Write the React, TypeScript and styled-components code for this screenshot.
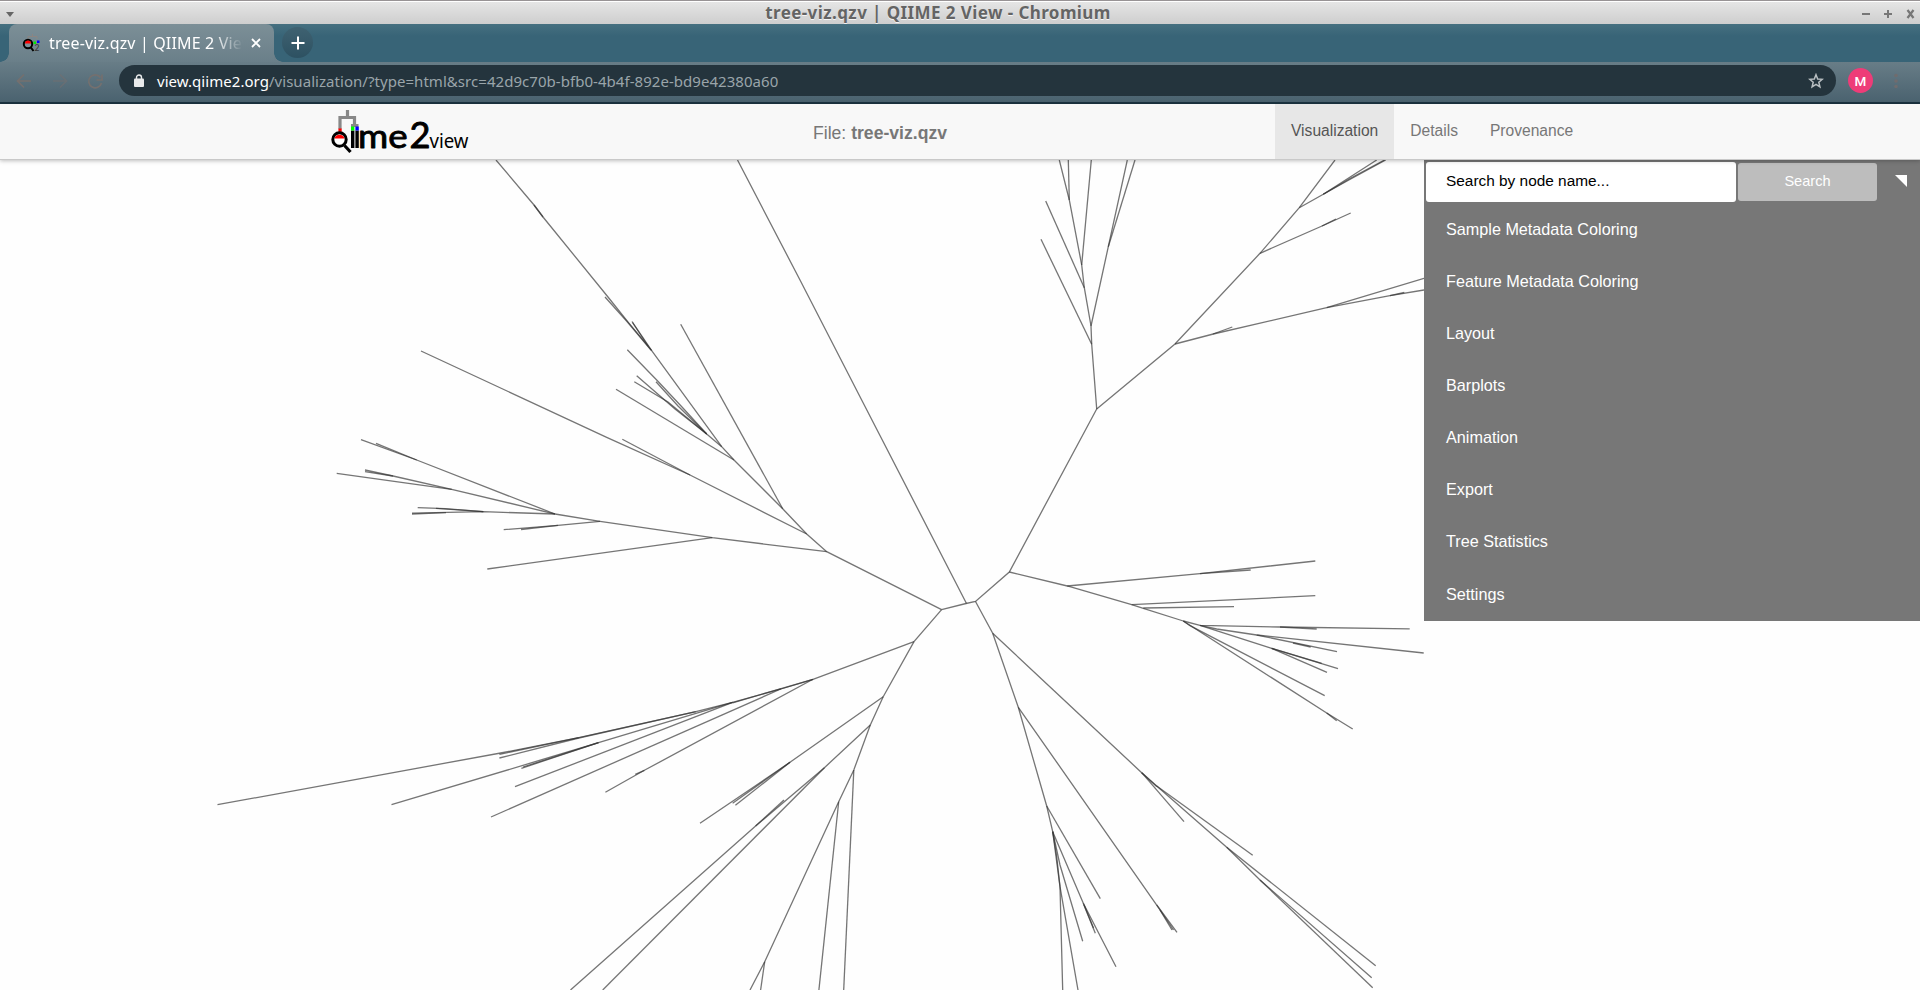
import React from "react";
import styled, { createGlobalStyle } from "styled-components";

const GlobalStyle = createGlobalStyle`
  * { box-sizing: border-box; }
  html, body { margin: 0; padding: 0; background: #fff; overflow: hidden; }
  body { font-family: "Liberation Sans", Arial, sans-serif; }
`;

const Window = styled.div`
  width: 1920px;
  height: 990px;
  display: flex;
  flex-direction: column;
  overflow: hidden;
  background: #fefefe;
`;

/* window chrome */

const TitleBar = styled.div`
  height: 24px;
  flex: none;
  display: grid;
  grid-template-columns: 20px 1fr 64px;
  align-items: center;
  border-top: 1px solid #989395;
  box-shadow: inset 0 1px 0 #fff;
  background: linear-gradient(#e6e6e6, #cecece);
`;

const WindowTitle = styled.div`
  text-align: center;
  font: bold 17px/22px "Noto Sans", sans-serif;
  letter-spacing: 0.41px;
  color: #646464;
  text-shadow: 0 1px 0 #f4f4f4;
  white-space: nowrap;
`;

const TabStrip = styled.div`
  height: 38px;
  flex: none;
  display: flex;
  padding-left: 9px;
  background: linear-gradient(#467080, #386477 12px, #386477);
`;

const Tab = styled.div`
  position: relative;
  width: 265px;
  height: 38px;
  display: flex;
  align-items: center;
  padding-left: 13px;
  border-radius: 8px 8px 0 0;
  background: linear-gradient(#7c8f97, #6a7f89);
  &::before,
  &::after {
    content: "";
    position: absolute;
    bottom: 0;
    width: 9px;
    height: 9px;
  }
  &::before {
    left: -9px;
    background: radial-gradient(circle at 0 0, transparent 8.5px, #6a7f89 9px);
  }
  &::after {
    right: -9px;
    background: radial-gradient(circle at 100% 0, transparent 8.5px, #6a7f89 9px);
  }
`;

const TabTitle = styled.div`
  width: 194px;
  margin-left: 9px;
  overflow: hidden;
  white-space: nowrap;
  font: 16px/24px "Noto Sans", sans-serif;
  letter-spacing: 0.15px;
  color: #fff;
  mask-image: linear-gradient(90deg, #000 164px, transparent 194px);
`;

const TabClose = styled.svg`
  margin-left: 8px;
`;

const NewTab = styled.div`
  width: 31px;
  height: 31px;
  margin: 3px 0 0 8px;
  border-radius: 50%;
  display: flex;
  align-items: center;
  justify-content: center;
  background: linear-gradient(#3f6271, #2d5162);
`;

const Toolbar = styled.div`
  height: 42px;
  flex: none;
  display: flex;
  align-items: center;
  padding: 0 0 3px 12px;
  border-bottom: 2px solid #1b3340;
  background: linear-gradient(#687d87, #4a626f);
`;

const NavIcons = styled.svg`
  flex: none;
  margin-right: 11px;
`;

const AddressBar = styled.div`
  width: 1717px;
  height: 31px;
  display: flex;
  align-items: center;
  padding: 0 12px 0 14px;
  border-radius: 16px;
  background: #24343d;
`;

const Url = styled.div`
  flex: 1;
  margin-left: 12px;
  font: 15px/24px "Noto Sans", sans-serif;
  letter-spacing: 0.045px;
  color: #9aa5aa;
  white-space: nowrap;
`;

const Host = styled.span`
  color: #fff;
`;

const Avatar = styled.div`
  width: 25px;
  height: 25px;
  margin-left: 12px;
  border-radius: 50%;
  background: #ee3c78;
  color: #fff;
  font: 500 13.5px/26px Roboto, sans-serif;
  text-align: center;
`;

const MenuDots = styled.svg`
  margin-left: 18px;
`;

/* page header */

const Header = styled.header`
  position: relative;
  z-index: 1;
  height: 56px;
  flex: none;
  display: flex;
  padding-left: 325px;
  background: #f8f8f8;
  border-bottom: 1px solid #c9c9c9;
  box-shadow: 0 1px 4px rgba(0, 0, 0, 0.25);
`;

const Logo = styled.svg`
  flex: none;
  margin-right: 10px;
`;

const FileName = styled.div`
  width: 790px;
  padding-top: 3px;
  text-align: center;
  font-size: 17.6px;
  line-height: 52px;
  color: #777;
`;

const NavItem = styled.a<{ $active?: boolean }>`
  height: 55px;
  padding: 0 16px;
  font-size: 15.6px;
  line-height: 54px;
  color: ${(p) => (p.$active ? "#555" : "#777")};
  background: ${(p) => (p.$active ? "#e7e7e7" : "transparent")};
`;

/* content */

const Main = styled.main`
  flex: 1;
  display: flex;
  align-items: flex-start;
`;

const TreeCanvas = styled.svg`
  flex: none;
  display: block;
`;

const SidePanel = styled.aside`
  width: 496px;
  height: 461px;
  background: #777;
  color: #fff;
`;

const SearchRow = styled.div`
  height: 44px;
  display: flex;
  align-items: center;
  padding-left: 2px;
`;

const SearchField = styled.input`
  width: 310px;
  height: 40px;
  padding: 0 20px 3px;
  border: 0;
  border-radius: 3px;
  background: #fff;
  font: 15.4px "Liberation Sans", Arial, sans-serif;
  &::placeholder {
    color: #000;
    opacity: 1;
  }
`;

const SearchButton = styled.button`
  width: 139px;
  height: 38px;
  margin-left: 2px;
  padding: 0 0 3px;
  border: 0;
  border-radius: 3px;
  background: #bdbdbd;
  color: #fff;
  font: 14.6px "Liberation Sans", Arial, sans-serif;
`;

const Collapse = styled.svg`
  margin: 0 0 2px 18px;
`;

const PanelItem = styled.div`
  height: 52px;
  padding-left: 22px;
  font-size: 16.2px;
  line-height: 50px;
  &:last-child {
    line-height: 52px;
  }
`;

const menu = [
  "Sample Metadata Coloring",
  "Feature Metadata Coloring",
  "Layout",
  "Barplots",
  "Animation",
  "Export",
  "Tree Statistics",
  "Settings",
];

/* branches of the unrooted tree, each a run of points */
const branches = [
  // backbone
  "941.6,609.6 966,603.5 975.5,601.5 1009.3,572 1096.7,409",
  "737.5,160 800,280 860,396.7 966.5,603.5",
  // upper left
  "496,160 534,205 543,217 608,297 627.7,321.7 651.7,350.7 721.7,446.7 734,460 782.7,508.7 806.7,534 826.7,551.7 941.6,609.6",
  "534,205 543,217",
  "605,297 627,321.5 651,350",
  "632,321.5 651.7,350.7",
  "632.5,322.5 648,346",
  "680.7,324.3 782.7,508.7",
  "627.3,349.7 656.7,380 682,407 706.7,434 721.7,446.7",
  "656,381.7 678,406 706.7,434",
  "636.7,375.7 675,409 706.7,434",
  "634.3,381.7 668,402 706.7,434",
  "616,389.3 734,460",
  "622.3,439.3 690,475",
  "421,351 606.7,437.3 690,475 806.7,534",
  // left
  "361,439.7 416.7,460 555,514",
  "376,443.3 416.7,460",
  "365,470 393,476 451.7,489.3 555,514",
  "365,471.6 393,476",
  "336.7,473.3 451.7,489.3",
  "417.7,507.7 445,508.6 483.3,511.7",
  "436,508.4 483.3,511.7",
  "412,513.2 483.3,511.7 555,514",
  "412,514 446,512.6",
  "555,514 600,521.3 712.3,537.7 826.7,551.7",
  "503.7,529.7 558,525.3 600,521.3",
  "521,529.5 558,525.3",
  "487.3,569 712.3,537.7",
  // upper right
  "1096.7,409 1175,344 1260,253.3 1299.3,207.7 1335,160",
  "1096.7,409 1091.7,344.3 1091,326 1084.3,287.7 1081.7,265 1069.3,200 1059.3,160",
  "1041,239.3 1091.7,344.3",
  "1045.7,201 1084.3,287.7",
  "1068.3,160 1069.3,200",
  "1091.3,160 1081.7,265",
  "1091,326 1108.3,246.7 1127.3,160",
  "1108.3,246.7 1135,160",
  "1260,253.3 1324.3,225 1350.7,213",
  "1322,226 1336,219",
  "1299.3,207.7 1323.3,194.3 1376.7,160",
  "1323.3,194.3 1348,180.5 1385.7,160",
  "1323.3,194.3 1350,178.5 1384.5,160",
  "1175,344 1213.3,334 1326.7,307.7 1424,278.3",
  "1326.7,307.7 1390,295.7 1424,290",
  "1390,295.7 1404.3,292.5",
  "1213,334 1232.3,327",
  // right
  "1009.3,572 1067.3,586 1131.7,604.7 1143.3,608.3 1183.3,621",
  "1067.3,586 1200,573.7 1315.3,561",
  "1200,573.7 1250.7,570",
  "1131.7,604.7 1315.3,595.7",
  "1143.3,608 1234,606.7",
  "1183.3,621 1200,625.3 1280,627 1409.7,628.8",
  "1280,627 1316.7,629",
  "1200,625.3 1216.7,629 1256.7,635 1423.7,653",
  "1256.7,635 1337,651.7",
  "1293,643 1310.7,647",
  "1200,625.3 1271.7,648.3 1338,668.7",
  "1271.7,648.3 1321.7,663.3",
  "1271.7,648.3 1327,672.3",
  "1183.3,621 1190,625.7 1324.7,695.7",
  "1183.3,621 1326.7,713 1352.7,729",
  "1326.7,713 1336.7,720.7",
  // lower right
  "975.5,601.5 992.7,633.3 1018.3,707.3 1046.7,806 1052.7,831.7 1056.7,856.7 1060,886.7 1062.7,990",
  "992.7,633.3 1053.3,690 1141.7,772.7 1156.7,786 1226.7,847.3 1260,880 1371.7,977.7",
  "1260,880 1372.7,987.7",
  "1226.7,847.3 1375.7,965.7",
  "1156.7,786 1252.7,855.3",
  "1141.7,772.7 1156.7,786.5",
  "1141.7,772.7 1184,821.7",
  "1018.3,707.3 1156.7,905 1177,932.3",
  "1156.7,905 1173.5,930",
  "1160,910 1172,930",
  "1046.7,806 1100.3,898.7",
  "1052.7,831.7 1083.3,903.3 1116,966.7",
  "1083.3,903.3 1095.3,933.3",
  "1084,905 1093.5,928",
  "1052.7,831.7 1060,865 1082.7,941.3",
  "1052.7,831.7 1060,886.7 1078,990",
  // bottom
  "941.6,609.6 914,641.7 883.2,696.7 870.3,725 853.8,770 838.7,801.7 764.7,961.7 750,990",
  "764.7,961.7 760.6,990",
  "838.7,801.7 818.9,990",
  "853.8,770 843.7,990",
  "870.3,725 824.4,767.7 755.6,826 570.5,990",
  "824.4,767.7 602.7,990",
  "755.6,826 784,800",
  "883.2,696.7 790,762.3 700,823.3",
  "790,762.3 732.6,803.3",
  "790,762.3 735.4,805.3",
  // lower left
  "914,641.7 813,679.3 780.8,689 732.6,702.3 695.9,711.7 578.8,737.7 500.7,753 217.5,804.7",
  "813,679.3 732.6,702.8",
  "578.8,737.7 499.4,754.3",
  "695.9,711.7 578.8,738 499.4,758",
  "732.6,702.3 598.5,742.7 391.5,804.7",
  "598.5,742.7 521.4,768.3",
  "598.5,742.7 523,767",
  "732.6,702.3 515,786.7",
  "780.8,689 491,817",
  "813,679.3 644.4,770.3 605.4,792.3",
  "644.4,770.3 635.3,774.3",
];

const App: React.FC = () => (
  <Window>
    <GlobalStyle />
    <TitleBar>
      <svg width="20" height="22" viewBox="0 0 20 22">
        <path d="M6 10h8l-4 5z" fill="#666" />
      </svg>
      <WindowTitle>tree-viz.qzv | QIIME 2 View - Chromium</WindowTitle>
      <svg width="64" height="22" viewBox="0 0 64 22" fill="none" stroke="#777" strokeWidth="2">
        <path d="M6 12h8M28 12h8M32 8v8" />
        <path d="M51.5 8l6 8M57.5 8l-6 8" strokeWidth="2.2" />
      </svg>
    </TitleBar>

    <TabStrip>
      <Tab>
        <svg width="18" height="18" viewBox="0 0 18 18">
          <path d="M6 5V2.5h9V5M10.500 2.500V0" stroke="#8c8582" strokeWidth="1" fill="none" />
          <circle cx="6" cy="10" r="4.200" fill="#7c8f97" stroke="#000" strokeWidth="2" />
          <path d="M3 9.500a3 3 0 0 1 6 0z" fill="#f00" />
          <path d="M8.500 13l3 4" stroke="#000" strokeWidth="2" />
          <path d="M11.500 7.500h2.500v2.500h-2.500z" fill="#0e0" />
          <path d="M15 6.500h2.500v2.500H15z" fill="#00f" />
          <text x="12.500" y="16.500" fontSize="8.500" fontFamily="Lato" fill="#333">2</text>
        </svg>
        <TabTitle>tree-viz.qzv | QIIME 2 View</TabTitle>
        <TabClose width="10" height="10" viewBox="0 0 10 10" stroke="#fff" strokeWidth="1.800">
          <path d="M1 1l8 8M9 1L1 9" />
        </TabClose>
      </Tab>
      <NewTab>
        <svg width="14" height="14" viewBox="0 0 14 14" stroke="#fff" strokeWidth="2">
          <path d="M7 0.500v13M0.500 7h13" />
        </svg>
      </NewTab>
    </TabStrip>

    <Toolbar>
      <NavIcons width="96" height="22" viewBox="12 70 96 22" fill="none" stroke="#74706f" strokeWidth="1.700">
        <path d="M31 81H18M24 74.500L17.500 81l6.500 6.500" />
        <path d="M53 81h13M60 74.500l6.500 6.500-6.500 6.500" opacity="0.55" />
        <path d="M100.500 77.500A6.500 6.500 0 1 0 101.500 83M102 74.500v5.500h-5.500" />
      </NavIcons>
      <AddressBar>
        <svg width="12" height="14" viewBox="0 0 12 14">
          <rect x="1" y="4.500" width="10" height="8.500" rx="1" fill="#e8eaeb" />
          <path d="M3.500 5V3.500a2.500 2.500 0 0 1 5 0V5" fill="none" stroke="#e8eaeb" strokeWidth="1.400" />
        </svg>
        <Url>
          <Host>view.qiime2.org</Host>/visualization/?type=html&amp;src=42d9c70b-bfb0-4b4f-892e-bd9e42380a60
        </Url>
        <svg width="16" height="16" viewBox="0 0 16 16" fill="none" stroke="#b9bfc2" strokeWidth="1.500">
          <path d="M8 1.700l1.700 4.300 4.600.300-3.500 3 1.100 4.500L8 11.400l-3.900 2.400 1.100-4.500-3.500-3 4.600-.300z" />
        </svg>
      </AddressBar>
      <Avatar>M</Avatar>
      <MenuDots width="10" height="16" viewBox="0 0 10 16" fill="#706c6e">
        <circle cx="5" cy="2.500" r="1.800" />
        <circle cx="5" cy="8" r="1.800" />
        <circle cx="5" cy="13.500" r="1.800" />
      </MenuDots>
    </Toolbar>

    <Header>
      <Logo width="150" height="55" viewBox="325 104 150 55">
        <path d="M340 129v-11.500h14.500v7M347.500 117.500V110M351 125.500h7.500" fill="none" stroke="#888" strokeWidth="3.200" />
        <path d="M338.400 128.500h3.300v4h-3.300z" fill="#f00" />
        <circle cx="339.500" cy="139.500" r="6.700" fill="#fff" stroke="#000" strokeWidth="3" />
        <path d="M334.500 138.500a5.200 5.200 0 0 1 10 0z" fill="#f00" />
        <path d="M344.500 145.500l6 6.500" stroke="#000" strokeWidth="3.200" />
        <path d="M351 130.500h3.400V148H351zM355.400 130.500h3.400V148h-3.400z" />
        <path d="M351 126.500h3.400v4H351z" fill="#0f0" />
        <path d="M355.400 126.500h3.400v4h-3.400z" fill="#00f" />
        <g fontFamily="Lato" stroke="#000" strokeWidth="0.900" strokeLinejoin="round">
          <text x="358" y="147.500" fontSize="33" textLength="49.500" lengthAdjust="spacingAndGlyphs">me</text>
          <text x="409.500" y="147.500" fontSize="37" textLength="21" lengthAdjust="spacingAndGlyphs">2</text>
        </g>
        <text x="429.500" y="148" fontFamily="Noto Sans" fontSize="19.500" textLength="39" lengthAdjust="spacingAndGlyphs">view</text>
      </Logo>
      <FileName>
        File: <b>tree-viz.qzv</b>
      </FileName>
      <NavItem $active>Visualization</NavItem>
      <NavItem>Details</NavItem>
      <NavItem>Provenance</NavItem>
    </Header>

    <Main>
      <TreeCanvas width="1424" height="830" viewBox="0 160 1424 830">
        <g fill="none" stroke="#333" strokeOpacity="0.680" strokeWidth="1.300">
          {branches.map((points) => (
            <polyline key={points} points={points} />
          ))}
        </g>
      </TreeCanvas>
      <SidePanel>
        <SearchRow>
          <SearchField placeholder="Search by node name..." />
          <SearchButton>Search</SearchButton>
          <Collapse width="12" height="12" viewBox="0 0 12 12">
            <path d="M0 0h12v12z" fill="#fff" />
          </Collapse>
        </SearchRow>
        {menu.map((label) => (
          <PanelItem key={label}>{label}</PanelItem>
        ))}
      </SidePanel>
    </Main>
  </Window>
);

export default App;
